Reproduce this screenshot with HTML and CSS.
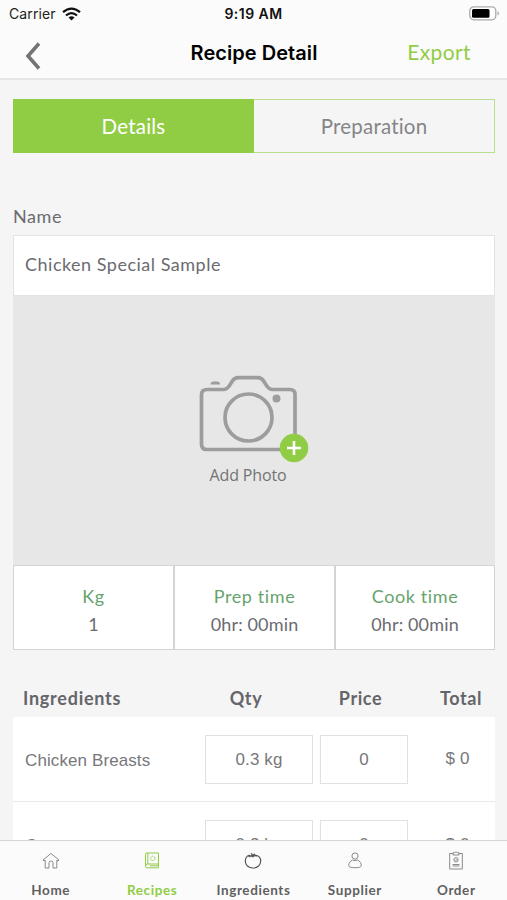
FILE: index.html
```html
<!DOCTYPE html>
<html lang="en">
<head>
<meta charset="utf-8">
<title>Recipe Detail</title>
<link rel="stylesheet" href="styles.css">
</head>
<body>
<div class="app">
  <header class="top">
    <div class="status">
      <div class="carrier"><span>Carrier</span>
        <svg width="19" height="14" viewBox="0 0 19 14" fill="none" stroke="#111" stroke-width="2.3"><path d="M1 5.2Q9.500-2 18 5.200M4 8.500Q9.500 3.700 15 8.500"/><path d="M6.500 10.400Q9.500 7.900 12.500 10.400L9.500 13.500Z" fill="#111" stroke="none"/></svg>
      </div>
      <div class="clock">9:19 AM</div>
      <svg class="battery" width="31" height="15" viewBox="0 0 31 15"><rect x=".8" y=".8" width="26" height="13" rx="4" fill="#fff" stroke="#aaa" stroke-width="1.300"/><rect x="3" y="3" width="17.500" height="8.700" rx="1.500" fill="#000"/><path d="M28.500 5Q31.500 7.300 28.500 9.600Z" fill="#aaa"/></svg>
    </div>
    <nav class="bar">
      <svg class="back" width="16" height="28" viewBox="0 0 16 28" fill="none" stroke="#747474" stroke-width="3.600"><path d="M14 1.500L3 14L14 26.500"/></svg>
      <h1 class="title">Recipe Detail</h1>
      <span class="export">Export</span>
    </nav>
  </header>
  <main class="content">
    <div class="segments"><div class="segment active">Details</div><div class="segment">Preparation</div></div>
    <div class="label">Name</div>
    <div class="name"><span>Chicken Special Sample</span></div>
    <div class="photo">
      <svg width="110" height="88" viewBox="0 0 110 88" fill="none" stroke="#9d9d9d" stroke-width="3.700"><path d="M8 14.500H25C29 14.500 31 10 33 6.500Q35.500 2.700 39 2.700H59Q62.500 2.700 65 6.500C67 10 69 14.500 73 14.500H91Q96 14.500 96 19.500V69.500Q96 74.500 91 74.500H8Q2.500 74.500 2.500 69V20Q2.500 14.500 8 14.500Z"/><circle cx="49.500" cy="42.500" r="23.500"/><circle cx="77.500" cy="23.500" r="4" fill="#9d9d9d" stroke="none"/><path d="M11.500 9.500Q11.500 6.500 14.500 6.500H18Q21 6.500 21 9.500Z" fill="#9d9d9d" stroke="none"/><circle cx="95" cy="73" r="14.300" fill="#91cc45" stroke="none"/><path d="M95 66V80M88 73H102" stroke="#fff" stroke-width="2.600"/></svg>
      <span class="add">Add Photo</span>
    </div>
    <div class="stats">
      <div class="stat"><span class="key">Kg</span><span>1</span></div>
      <div class="stat"><span class="key">Prep time</span><span>0hr: 00min</span></div>
      <div class="stat"><span class="key">Cook time</span><span>0hr: 00min</span></div>
    </div>
    <div class="row head"><span class="item">Ingredients</span><span>Qty</span><span>Price</span><span>Total</span></div>
    <div class="row"><span class="item">Chicken Breasts</span><span class="field">0.3 kg</span><span class="field">0</span><span>$ 0</span></div>
    <div class="row next"><span class="item">Carrot</span><span class="field">0.2 kg</span><span class="field">0</span><span>$ 0</span></div>
  </main>
  <footer class="tabs">
    <div class="tab"><svg width="18" height="18" viewBox="0 0 18 18"><path d="M1 8L9 1.500L17 8L16 9L14.800 8.200V16H11V10.500Q11 9 9 9Q7 9 7 10.500V16H3.200V8.200L2 9Z"/></svg><span>Home</span></div>
    <div class="tab on"><svg width="18" height="18" viewBox="0 0 18 18"><path d="M4 1H15.500V15.800H4Q2.500 15.800 2.500 14V2.500Q2.500 1 4 1ZM2.500 14Q2.500 12 4.500 12H15.500M7 13.800H15M4.800 1V12"/><circle cx="9.800" cy="6.400" r="2.200" stroke-dasharray="1.500 .6"/></svg><span>Recipes</span></div>
    <div class="tab"><svg class="dark" width="18" height="18" viewBox="0 0 18 18"><path d="M6 3.400C3 3.200 1.300 6 1.300 9C1.300 13 4.500 16 9 16C13.500 16 16.700 13 16.700 9C16.700 5.500 14.500 3.200 11 3.400"/><path d="M4.500 4L8 3L7 1L9 2.600L11 1.800L10.500 3L13 4L10.200 4.200L9 5.200L7.500 4.500L5 5Z" fill="#555" stroke-width=".5"/></svg><span>Ingredients</span></div>
    <div class="tab"><svg width="18" height="18" viewBox="0 0 18 18"><circle cx="9" cy="4" r="3.100"/><path d="M6.500 8Q9 9.300 11.500 8C14 9 15.300 11.500 15.300 13.500Q15.300 15.700 9 15.700Q2.700 15.700 2.700 13.500C2.700 11.500 4 9 6.500 8Z"/></svg><span>Supplier</span></div>
    <div class="tab"><svg width="18" height="18" viewBox="0 0 18 18"><path d="M6 1.500H2.700V17H15.300V1.500H12M6 .7H7.500Q9-1 10.500 .7H12V3H6ZM5.500 12.500H12.500M5.500 14H12.500"/><circle cx="9" cy="7.800" r="2.200"/><path d="M8 7.500L9 8.500L10.300 7"/></svg><span>Order</span></div>
  </footer>
</div>
</body>
</html>
```

FILE: styles.css
```css
* { box-sizing: border-box; }
body { margin: 0; background: #f5f5f5; font-family: Lato, sans-serif; color: #6b6b70; }
.app { width: 507px; height: 900px; display: flex; flex-direction: column; overflow: hidden; }
.top { height: 80px; flex: none; background: #fbfbfb; border-bottom: 2px solid #e6e6e6; }
.status { height: 27px; display: grid; grid-template-columns: 1fr auto 1fr; align-items: center; padding: 0 7px 0 9px; font: 14px Inter, sans-serif; color: #222; }
.carrier { display: flex; align-items: center; gap: 6px; letter-spacing: .1px; }
.clock { font-weight: 600; color: #111; letter-spacing: .45px; margin-left: -2px; }
.battery { justify-self: end; }
.bar { height: 51px; display: grid; grid-template-columns: 1fr auto 1fr; align-items: center; padding: 0 36px 0 37px; }
.back { margin: 7px 0 0 -12px; }
.title { margin: 0; font: 600 20px Inter, sans-serif; color: #000; letter-spacing: .05px; }
.export { justify-self: end; font-size: 21px; color: #91cc45; letter-spacing: .4px; padding-bottom: 3px; }
.content { flex: 1; min-height: 0; overflow: hidden; padding: 19px 12px 0 13px; }
.segments { height: 54px; display: grid; grid-template-columns: 240px 1fr; border: 1px solid #b9e08e; }
.segment { display: flex; align-items: center; justify-content: center; font-size: 20.500px; letter-spacing: .2px; color: #858588; }
.segment.active { margin: -1px 0 -1px -1px; background: #91cc45; color: #fff; }
.label { margin-top: 50px; height: 32px; line-height: 27px; font-size: 18px; letter-spacing: .6px; }
.name { height: 61px; display: flex; align-items: center; padding: 0 0 3px 11px; background: #fff; border: 1px solid #e3e3e3; font-size: 18px; letter-spacing: .5px; }
.photo { height: 269px; background: #e7e7e7; display: flex; flex-direction: column; align-items: center; padding-top: 79px; }
.photo svg { margin-right: 1px; }
.add { margin-right: 12px; font: 16px/24px "Open Sans", sans-serif; letter-spacing: -.15px; color: #737373; }
.stats { height: 85px; display: grid; grid-template-columns: 159px 161px 1fr; background: #fff; border: 1px solid #d4d4d4; }
.stat { display: flex; flex-direction: column; align-items: center; padding-top: 16px; font-size: 18px; line-height: 28px; letter-spacing: .15px; }
.stat + .stat { border-left: 2px solid #d4d4d4; }
.key { color: #67a36c; font-size: 18px; letter-spacing: .6px; }
.row { height: 85px; display: grid; grid-template-columns: 192px 108px 7px 88px 1fr; align-items: center; text-align: center; background: #fff; border-bottom: 1px solid #e9e9e9; font: 17px "Liberation Sans", sans-serif; letter-spacing: .1px; color: #77777a; }
.row > :nth-child(3) { grid-column: 4; }
.row > :nth-child(4) { grid-column: 5; padding-left: 12px; }
.item { text-align: left; padding: 3px 0 0 12px; }
.field { height: 49px; line-height: 47px; border: 1px solid #dfe2e2; }
.next .field { line-height: 48px; }
.next > :nth-child(4) { padding-top: 1px; }
.head { height: 67px; background: none; border: 0; padding-top: 29px; font: bold 18px Lato, sans-serif; letter-spacing: .6px; color: #65656a; }
.head .item { padding: 0 0 0 10px; letter-spacing: .75px; }
.head > :nth-child(2) { padding-right: 26px; }
.head > :nth-child(3) { padding-right: 7px; }
.head > :nth-child(4) { padding-left: 19px; }
.tabs { height: 60px; flex: none; display: grid; grid-template-columns: repeat(5, 1fr); background: #fbfbfb; border-top: 1px solid #d5d5d5; }
.tab { display: flex; flex-direction: column; align-items: center; padding-top: 11px; font-size: 13.500px; font-weight: bold; line-height: 16px; letter-spacing: .6px; color: #606060; }
.tab svg { margin-bottom: 12px; fill: none; stroke: #8a8a8a; stroke-width: 1; overflow: visible; }
.tab svg.dark { stroke: #555; stroke-width: 1.200; }
.tab.on { color: #91cc45; }
.tab.on svg { stroke: #91cc45; }
```
